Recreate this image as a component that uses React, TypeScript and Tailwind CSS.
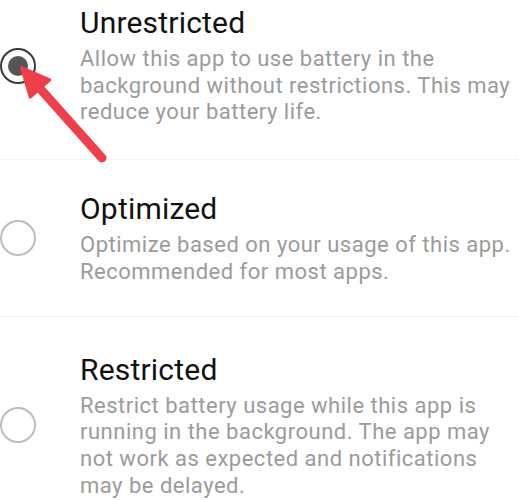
import React from "react";

type Item = { title: string; lines: string[]; selected: boolean };

function Radio({ selected }: { selected: boolean }) {
  return selected ? (
    <div className="w-[36px] h-[36px] rounded-full border-2 border-[#3a3a3a] flex items-center justify-center">
      <div className="w-[20px] h-[20px] rounded-full bg-[#555555]" />
    </div>
  ) : (
    <div className="w-[36px] h-[36px] rounded-full border-2 border-[#bdbdbd]" />
  );
}

function Option({ title, lines, selected }: Item) {
  return (
    <div className="flex items-center">
      <div className="w-[80px] shrink-0 flex items-center">
        <Radio selected={selected} />
      </div>
      <div className="flex flex-col">
        <div className="text-[30px] leading-[36px] tracking-[0.2px] text-[#111111] whitespace-nowrap">{title}</div>
        <div className="mt-[5px] text-[22px] leading-[26.7px] tracking-[0.5px] text-[#9b9b9b] whitespace-nowrap">
          {lines.map((l, i) => (
            <div key={i}>{l}</div>
          ))}
        </div>
      </div>
    </div>
  );
}

export default function App() {
  return (
    <div
      className="relative w-[519px] h-[500px] bg-white overflow-hidden"
      style={{ fontFamily: "Roboto, 'Noto Sans', sans-serif" }}
    >
      <div className="flex flex-col">
        <div className="pt-[5px] pb-[33px]">
          <Option
            title="Unrestricted"
            lines={[
              "Allow this app to use battery in the",
              "background without restrictions. This may",
              "reduce your battery life.",
            ]}
            selected
          />
        </div>
        <div className="h-px bg-[#f3f3f3]" />
        <div className="pt-[31px] pb-[30px]">
          <Option
            title="Optimized"
            lines={["Optimize based on your usage of this app.", "Recommended for most apps."]}
            selected={false}
          />
        </div>
        <div className="h-px bg-[#f3f3f3]" />
        <div className="pt-[35px]">
          <Option
            title="Restricted"
            lines={[
              "Restrict battery usage while this app is",
              "running in the background. The app may",
              "not work as expected and notifications",
              "may be delayed.",
            ]}
            selected={false}
          />
        </div>
      </div>
      <svg
        className="absolute left-0 top-0 pointer-events-none"
        width="519"
        height="500"
        viewBox="0 0 519 500"
      >
        <line x1="40" y1="88.5" x2="102" y2="158" stroke="#ee3f4b" strokeWidth="9" strokeLinecap="round" />
        <polygon
          points="21.5,67.5 49.8,79.9 30.2,97.1"
          fill="#ee3f4b"
          stroke="#ee3f4b"
          strokeWidth="3"
          strokeLinejoin="round"
        />
      </svg>
    </div>
  );
}
